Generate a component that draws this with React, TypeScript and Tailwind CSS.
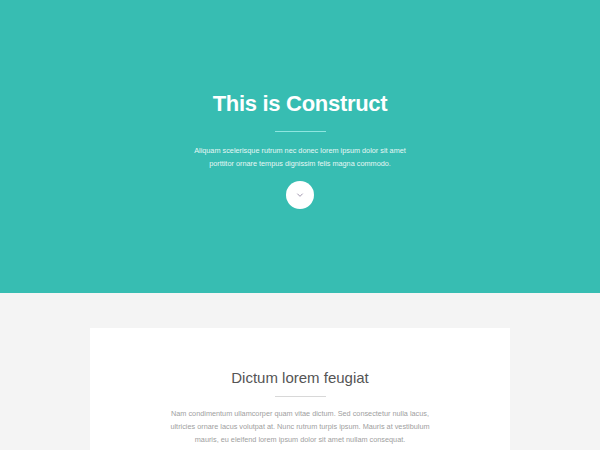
import React from 'react';

const ChevronDown: React.FC<{ className?: string }> = ({ className }) => (
  <svg viewBox="0 0 12 8" className={className} fill="none" stroke="currentColor" strokeWidth="1.4">
    <path d="M2 2l4 4 4-4" />
  </svg>
);

export default function App() {
  return (
    <div className="w-[600px] h-[450px] overflow-hidden bg-[#f4f4f4]" style={{ fontFamily: '"Liberation Sans", Arial, sans-serif' }}>
      <section className="h-[293px] bg-[#37bdb2] flex flex-col items-center pt-[90px]">
        <h1 className="text-[22px] leading-[28px] font-bold text-white tracking-[-0.3px]">This is Construct</h1>
        <div className="w-[51px] h-px bg-[#8ee6e0] mt-[13px]" />
        <p className="mt-[12px] text-[7.3px] leading-[13px] text-[#e6f7f5] text-center w-[222px]">
          Aliquam scelerisque rutrum nec donec lorem ipsum dolor sit amet porttitor ornare tempus dignissim felis magna commodo.
        </p>
        <button className="mt-[11px] w-[28px] h-[28px] rounded-full bg-white flex items-center justify-center text-[#9a8fa8]">
          <ChevronDown className="w-[8px] h-[6px]" />
        </button>
      </section>
      <main className="flex justify-center pt-[35px]">
        <div className="w-[420px] bg-white flex flex-col items-center pt-[40px] pb-[20px]">
          <h2 className="text-[15px] leading-[20px] text-[#555]">Dictum lorem feugiat</h2>
          <div className="w-[51px] h-px bg-[#d8d8d8] mt-[8px]" />
          <p className="mt-[10px] text-[7.3px] leading-[13px] text-[#a0a0a0] text-center w-[268px]">
            Nam condimentum ullamcorper quam vitae dictum. Sed consectetur nulla lacus, ultricies ornare lacus volutpat at. Nunc rutrum turpis ipsum. Mauris at vestibulum mauris, eu eleifend lorem ipsum dolor sit amet nullam consequat.
          </p>
        </div>
      </main>
    </div>
  );
}
